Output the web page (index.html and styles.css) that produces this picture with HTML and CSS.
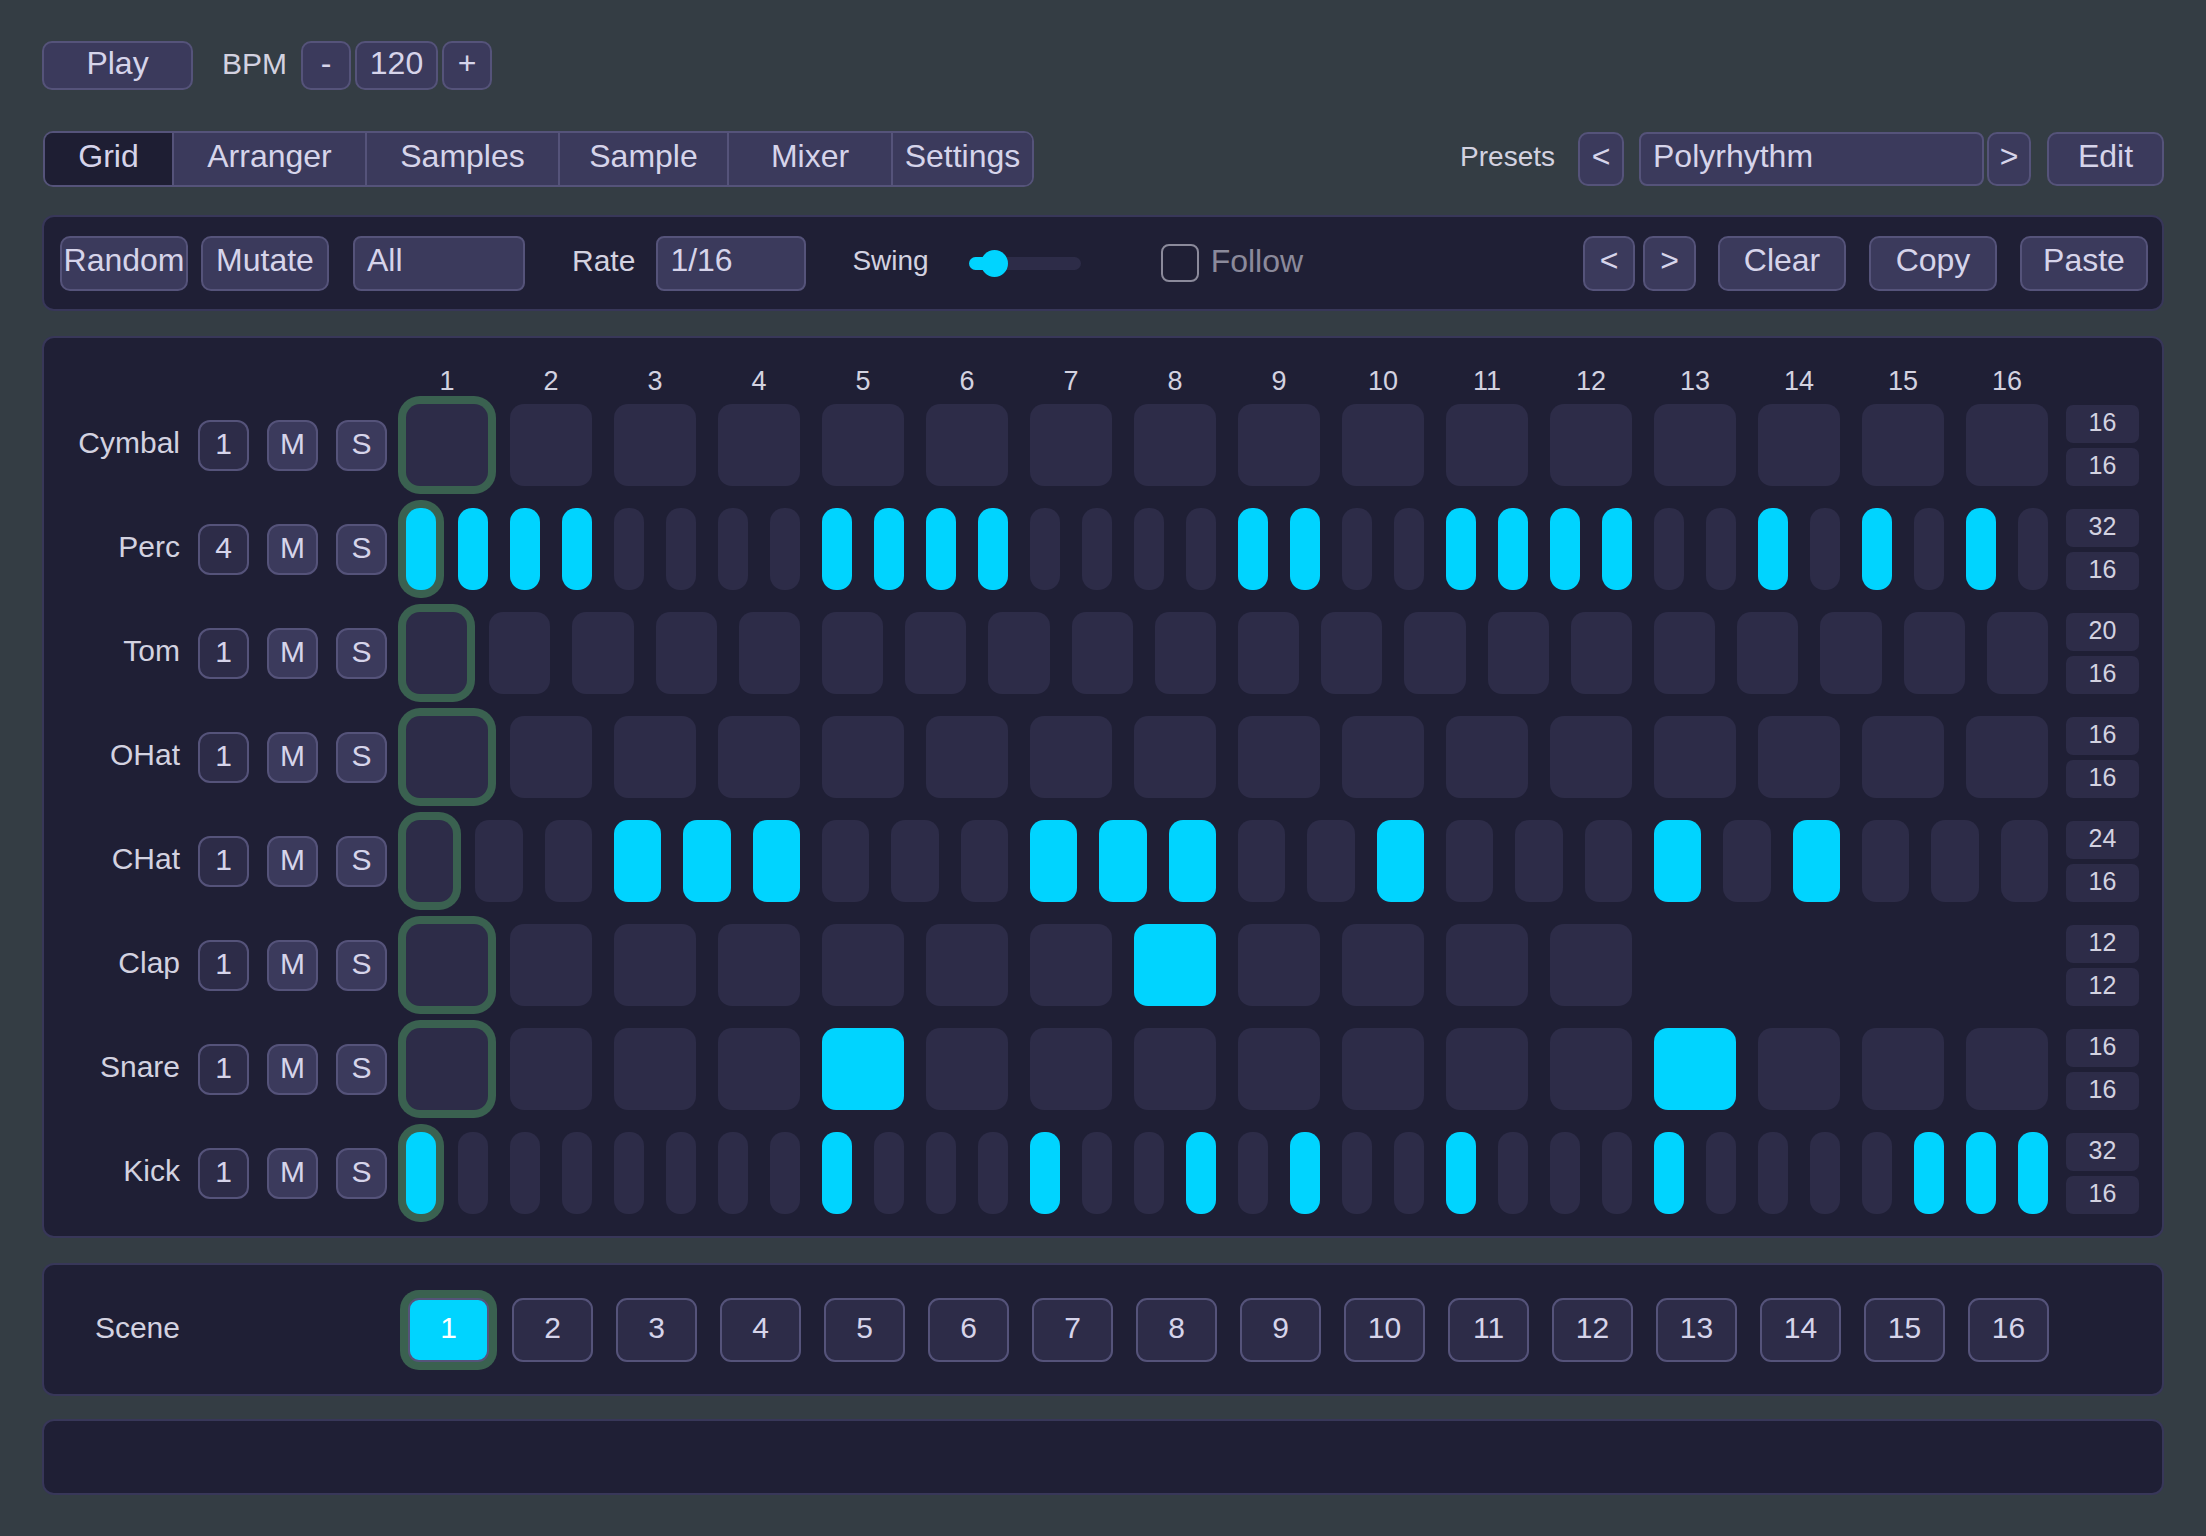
FILE: index.html
```html
<!DOCTYPE html>
<html lang="en">
<head>
  <meta charset="UTF-8">
  <meta name="viewport" content="width=device-width, initial-scale=1.0">
  <title>Sequencer</title>
  <link rel="stylesheet" href="styles.css">
</head>
<body>
  <div class="app">

    <!-- Transport -->
    <div class="transport">
      <button class="btn play-btn">Play</button>
      <span class="label bpm-label">BPM</span>
      <div class="bpm">
        <button class="btn bpm-step">-</button>
        <span class="field bpm-value">120</span>
        <button class="btn bpm-step">+</button>
      </div>
    </div>

    <!-- Tabs and presets -->
    <div class="nav-row">
      <nav class="tabs">
        <button class="tab active">Grid</button>
        <button class="tab">Arranger</button>
        <button class="tab">Samples</button>
        <button class="tab">Sample</button>
        <button class="tab">Mixer</button>
        <button class="tab">Settings</button>
      </nav>
      <div class="presets">
        <span class="label presets-label">Presets</span>
        <button class="btn arrow-btn">&lt;</button>
        <span class="field preset-name">Polyrhythm</span>
        <button class="btn arrow-btn preset-next">&gt;</button>
        <button class="btn edit-btn">Edit</button>
      </div>
    </div>

    <!-- Pattern toolbar -->
    <div class="panel toolbar">
      <button class="btn tool-btn">Random</button>
      <button class="btn tool-btn mutate-btn">Mutate</button>
      <span class="field target-field">All</span>
      <span class="label rate-label">Rate</span>
      <span class="field rate-field">1/16</span>
      <span class="label swing-label">Swing</span>
      <div class="swing">
        <div class="swing-fill"></div>
        <div class="swing-knob"></div>
      </div>
      <span class="checkbox"></span>
      <span class="follow-label">Follow</span>
      <div class="toolbar-right">
        <button class="btn page-btn">&lt;</button>
        <button class="btn page-btn">&gt;</button>
        <button class="btn tool-btn clear-btn">Clear</button>
        <button class="btn tool-btn">Copy</button>
        <button class="btn tool-btn">Paste</button>
      </div>
    </div>

    <!-- Step grid -->
    <div class="panel grid-panel">
      <div class="grid-row header-row">
        <div class="row-head"></div>
        <div class="step-numbers" id="step-numbers"></div>
      </div>
      <div class="tracks" id="tracks"></div>
    </div>

    <!-- Scenes -->
    <div class="panel scene-panel">
      <div class="grid-row">
        <div class="row-head"><span class="track-name">Scene</span></div>
        <div class="scenes" id="scenes"></div>
      </div>
    </div>

    <div class="panel footer-panel"></div>
  </div>

  <script>
    // Track data: steps in the pattern, span = length in 1/16 columns
    const tracks = [
      { name: 'Cymbal', div: 1, steps: 16, span: 16, on: [] },
      { name: 'Perc', div: 4, steps: 32, span: 16, on: [1, 2, 3, 4, 9, 10, 11, 12, 17, 18, 21, 22, 23, 24, 27, 29, 31] },
      { name: 'Tom', div: 1, steps: 20, span: 16, on: [] },
      { name: 'OHat', div: 1, steps: 16, span: 16, on: [] },
      { name: 'CHat', div: 1, steps: 24, span: 16, on: [4, 5, 6, 10, 11, 12, 15, 19, 21] },
      { name: 'Clap', div: 1, steps: 12, span: 12, on: [8] },
      { name: 'Snare', div: 1, steps: 16, span: 16, on: [5, 13] },
      { name: 'Kick', div: 1, steps: 32, span: 16, on: [1, 9, 13, 16, 18, 21, 25, 30, 31, 32] }
    ];

    const COLUMN = 104; // one 1/16 column incl. gap
    const GAP = 22;

    // Column numbers
    const numbers = document.getElementById('step-numbers');
    for (let i = 1; i <= 16; i++) {
      const span = document.createElement('span');
      span.textContent = i;
      numbers.appendChild(span);
    }

    // Track rows
    const tracksEl = document.getElementById('tracks');
    tracks.forEach(track => {
      const row = document.createElement('div');
      row.className = 'grid-row track-row';

      row.innerHTML = `
        <div class="row-head">
          <span class="track-name">${track.name}</span>
          <button class="btn small-btn div-btn">${track.div}</button>
          <button class="btn small-btn">M</button>
          <button class="btn small-btn">S</button>
        </div>
      `;

      const steps = document.createElement('div');
      steps.className = 'steps';
      steps.style.width = (track.span * COLUMN - GAP) + 'px';
      for (let i = 1; i <= track.steps; i++) {
        const cell = document.createElement('div');
        cell.className = 'step';
        if (track.on.includes(i)) cell.classList.add('on');
        if (i === 1) cell.classList.add('playhead');
        steps.appendChild(cell);
      }
      row.appendChild(steps);

      const lens = document.createElement('div');
      lens.className = 'lengths';
      lens.innerHTML = `<span class="length">${track.steps}</span><span class="length">${track.span}</span>`;
      row.appendChild(lens);

      tracksEl.appendChild(row);
    });

    // Scene buttons
    const scenes = document.getElementById('scenes');
    for (let i = 1; i <= 16; i++) {
      const btn = document.createElement('button');
      btn.className = 'scene-btn' + (i === 1 ? ' active' : '');
      btn.textContent = i;
      scenes.appendChild(btn);
    }
  </script>
</body>
</html>
```

FILE: styles.css
```css
body {
  margin: 0;
  background-color: #343d44;
  font-family: "Liberation Sans", Arial, sans-serif;
  color: #d3d2e4;
}
.app {
  padding: 41px 42px 0 42px;
  display: flex;
  flex-direction: column;
}

/* Generic controls */
.btn {
  font-family: inherit;
  font-size: 32px;
  color: #d6d4ea;
  background-color: #3b3a5c;
  border: 2px solid #55537a;
  border-radius: 10px;
  padding: 0 0 5px 0;
  display: flex;
  align-items: center;
  justify-content: center;
}
.field {
  box-sizing: border-box;
  display: flex;
  align-items: center;
  font-size: 32px;
  color: #d6d4ea;
  background-color: #3b3a5c;
  border: 2px solid #55537a;
  border-radius: 8px;
  padding: 0 12px 5px 12px;
}
.label {
  font-size: 30px;
  color: #d3d2e0;
  padding-bottom: 4px;
}
.panel {
  box-sizing: border-box;
  background-color: #1f1f35;
  border: 2px solid #383759;
  border-radius: 12px;
}

/* Transport */
.transport {
  display: flex;
  align-items: center;
  height: 49px;
}
.play-btn {
  width: 151px;
  height: 49px;
}
.bpm-label {
  margin-left: 29px;
}
.bpm {
  display: flex;
  gap: 4px;
  margin-left: 14px;
}
.bpm-step {
  width: 50px;
  height: 49px;
}
.bpm-value {
  width: 83px;
  height: 49px;
  justify-content: center;
  padding: 0 0 5px 0;
  border-radius: 10px;
}

/* Tabs */
.nav-row {
  display: flex;
  align-items: center;
  justify-content: space-between;
  margin-top: 41px;
  height: 56px;
}
.tabs {
  display: flex;
  height: 56px;
  box-sizing: border-box;
  border: 2px solid #55537a;
  border-radius: 10px;
  overflow: hidden;
  margin-left: 1px;
}
.tab {
  font-family: inherit;
  font-size: 32px;
  color: #d6d4ea;
  background-color: #3b3a5c;
  border: none;
  border-left: 2px solid #55537a;
  padding: 0 0 5px 0;
}
.tab:first-child {
  border-left: none;
}
.tab.active {
  background-color: #1e1e33;
}
.tab:nth-child(1) { width: 127px; }
.tab:nth-child(2) { width: 193px; }
.tab:nth-child(3) { width: 193px; }
.tab:nth-child(4) { width: 169px; }
.tab:nth-child(5) { width: 164px; }
.tab:nth-child(6) { width: 141px; }

.presets {
  display: flex;
  align-items: center;
  height: 54px;
}
.presets-label {
  font-size: 28px;
  margin-right: 23px;
}
.arrow-btn {
  width: 46px;
  height: 54px;
}
.preset-name {
  width: 345px;
  height: 54px;
  margin-left: 15px;
}
.preset-next {
  width: 44px;
  margin-left: 3px;
}
.edit-btn {
  width: 117px;
  height: 54px;
  margin-left: 16px;
}

/* Toolbar */
.toolbar {
  margin-top: 28px;
  height: 96px;
  display: flex;
  align-items: center;
  padding: 0 14px 0 16px;
}
.tool-btn {
  width: 128px;
  height: 55px;
}
.mutate-btn {
  margin-left: 13px;
}
.target-field {
  width: 172px;
  height: 55px;
  margin-left: 24px;
}
.rate-label {
  margin-left: 47px;
}
.rate-field {
  width: 150px;
  height: 55px;
  margin-left: 21px;
}
.swing-label {
  font-size: 28px;
  margin-left: 46px;
}
.swing {
  position: relative;
  width: 112px;
  height: 13px;
  margin-left: 40px;
  background-color: #2d2c48;
  border-radius: 7px;
}
.swing-fill {
  width: 26px;
  height: 13px;
  border-radius: 7px;
  background-color: #00d4ff;
}
.swing-knob {
  position: absolute;
  left: 12px;
  top: -7px;
  width: 27px;
  height: 27px;
  border-radius: 50%;
  background-color: #00d4ff;
}
.checkbox {
  box-sizing: border-box;
  width: 38px;
  height: 38px;
  margin-left: 80px;
  border: 2px solid #8b8a9b;
  border-radius: 8px;
}
.follow-label {
  font-size: 32px;
  color: #8b8a9b;
  margin-left: 12px;
  padding-bottom: 4px;
}
.toolbar-right {
  display: flex;
  align-items: center;
  margin-left: auto;
}
.page-btn {
  width: 52px;
  height: 55px;
  margin-right: 8px;
}
.page-btn + .page-btn {
  width: 53px;
  margin-right: 0;
}
.clear-btn {
  margin-left: 22px;
  margin-right: 23px;
}
.clear-btn + .tool-btn {
  margin-right: 23px;
}

/* Step grid */
.grid-panel {
  margin-top: 25px;
  padding: 27px 23px 22px 20px;
}
.grid-row {
  display: flex;
  align-items: center;
  gap: 18px;
}
.row-head {
  width: 323px;
  margin-right: 1px;
  display: flex;
  align-items: center;
  gap: 18px;
  flex-shrink: 0;
}
.track-name {
  width: 116px;
  text-align: right;
  font-size: 30px;
  color: #d3d2e0;
  padding-bottom: 4px;
}
.header-row {
  height: 32px;
  margin-bottom: 7px;
}
.step-numbers {
  display: flex;
  gap: 22px;
  width: 1642px;
}
.step-numbers span {
  flex: 1;
  text-align: center;
  font-size: 27px;
  color: #d3d2e0;
}
.tracks {
  display: flex;
  flex-direction: column;
  gap: 22px;
}
.track-row {
  height: 82px;
}
.small-btn {
  width: 51px;
  height: 51px;
  font-size: 30px;
  border-radius: 12px;
  padding-bottom: 3px;
}
.div-btn {
  background-color: #2d2c48;
}
.steps {
  display: flex;
  gap: 22px;
  height: 82px;
  flex-shrink: 0;
}
.step {
  flex: 1;
  border-radius: 14px;
  background-color: #2d2c48;
}
.step.on {
  background-color: #00d4ff;
}
.step.playhead {
  box-shadow: 0 0 0 8px #3a6150;
}
.lengths {
  display: flex;
  flex-direction: column;
  gap: 5px;
  width: 73px;
  margin-left: auto;
}
.length {
  height: 38px;
  border-radius: 7px;
  background-color: #2d2c48;
  font-size: 25px;
  display: flex;
  align-items: center;
  justify-content: center;
  color: #d3d2e0;
  padding-bottom: 2px;
  box-sizing: border-box;
}

/* Scenes */
.scene-panel {
  margin-top: 25px;
  height: 133px;
  display: flex;
  align-items: center;
  padding-left: 20px;
}
.scenes {
  display: flex;
  gap: 22px;
  margin-left: 2px;
}
.scene-btn {
  box-sizing: border-box;
  width: 81px;
  height: 64px;
  font-family: inherit;
  font-size: 30px;
  color: #d6d4ea;
  background-color: #2d2c48;
  border: 2px solid #55537a;
  border-radius: 11px;
  padding: 0 0 3px 0;
}
.scene-btn + .scene-btn {
  margin-left: 1px;
}
.scene-btn.active {
  background-color: #00d4ff;
  color: #ffffff;
  box-shadow: 0 0 0 8px #3a6150;
}

.footer-panel {
  margin-top: 23px;
  height: 76px;
}
```
